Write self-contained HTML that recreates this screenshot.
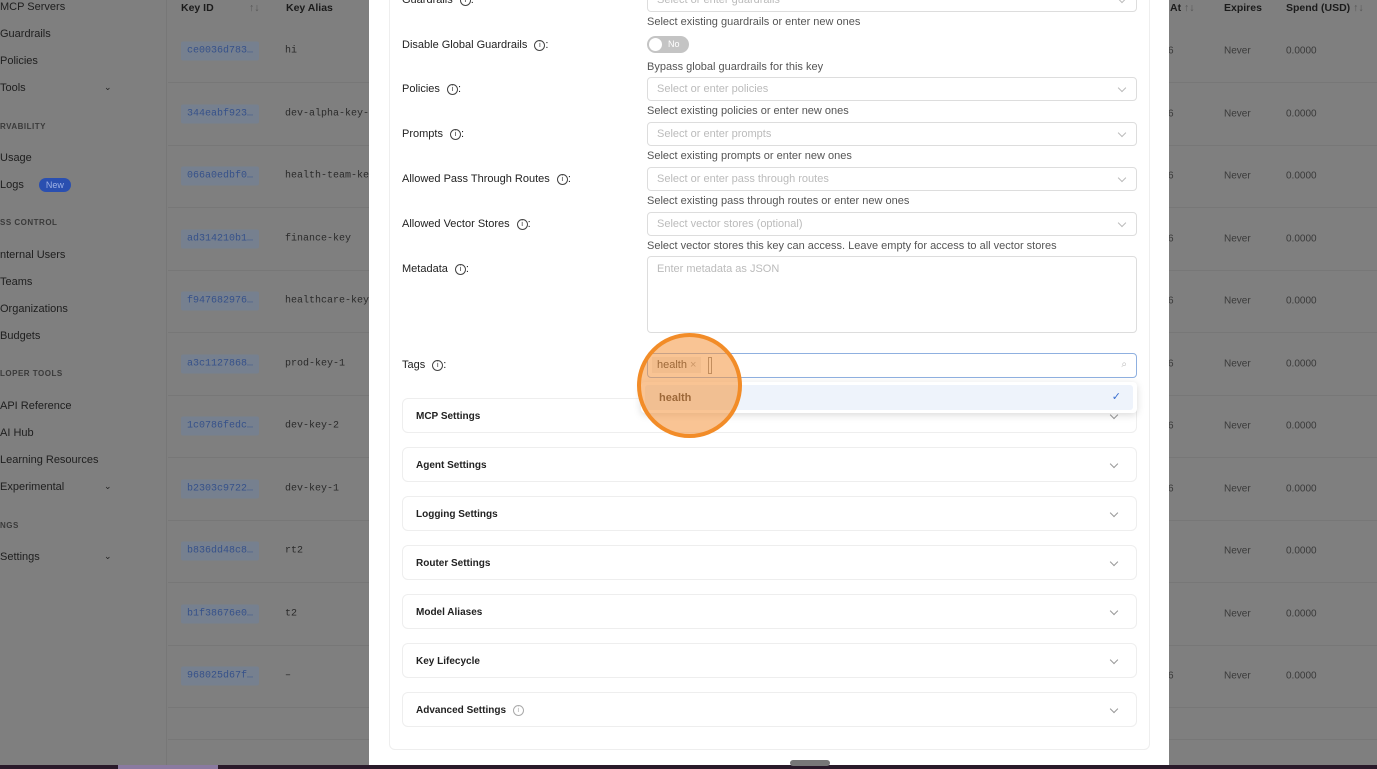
<!DOCTYPE html>
<html><head><meta charset="utf-8"><style>
*{box-sizing:border-box;margin:0;padding:0}
body{width:1377px;height:769px;overflow:hidden;position:relative;background:#7f7f7f;font-family:"Liberation Sans",sans-serif;font-size:11px;color:#222}
.sb{position:absolute;left:0;top:0;width:167px;height:769px;background:#7f7f7f;border-right:1px solid #777}
.sb div{position:absolute;left:0;font-size:11px;color:#1e1e1e}
.sb .h{font-size:8px;font-weight:bold;color:#3a3a3a;letter-spacing:.5px}
.chev{position:absolute;left:104px;font-size:9px}
.row{position:absolute;left:168px;width:1209px;height:62.5px;border-bottom:1px solid #777}
.kid{position:absolute;left:13px;top:50%;transform:translateY(-50%);background:#76808f;color:#36518a;font-family:"Liberation Mono",monospace;font-size:10px;padding:4px 6px;border-radius:2px}
.ka{position:absolute;left:117px;top:50%;transform:translateY(-50%);font-family:"Liberation Mono",monospace;font-size:10px;color:#2a2a2a}
.rt{position:absolute;top:50%;transform:translateY(-50%);font-size:10px;color:#3a3a3a}
.th{position:absolute;top:2px;font-weight:bold;font-size:10.5px;color:#1b1b1b}
.modal{position:absolute;left:369px;top:0;width:800px;height:765px;background:#fff}
.card{position:absolute;left:20px;top:-10px;width:761px;height:760px;border:1px solid #eee;border-radius:6px}
.lbl{position:absolute;left:402px;font-size:11px;color:#222;line-height:13px}
.i{display:inline-block;width:11px;height:11px;border:1px solid #444;border-radius:50%;font-size:7px;text-align:center;line-height:9px;vertical-align:top;margin-top:1px;margin-left:4px}
.inp{position:absolute;left:647px;width:490px;height:24px;border:1px solid #ddd;border-radius:4px;color:#bbb;font-size:11px;padding:5px 9px}
.inp:after{content:"";position:absolute;right:11px;top:7px;width:5px;height:5px;border-right:1px solid #bbb;border-bottom:1px solid #bbb;transform:rotate(45deg)}
.help{position:absolute;left:647px;font-size:11px;color:#555}
.acc{position:absolute;left:402px;width:735px;height:35px;border:1px solid #eee;border-radius:6px;font-weight:bold;font-size:10px;padding:12px 13px;color:#222}
.acc:after{content:"";position:absolute;right:19px;top:13px;width:5px;height:5px;border-right:1px solid #999;border-bottom:1px solid #999;transform:rotate(45deg)}
</style></head><body>
<div class="sb">
<div style="top:1px">MCP Servers</div>
<div style="top:28px">Guardrails</div>
<div style="top:55px">Policies</div>
<div style="top:82px">Tools</div><span class="chev" style="top:82px;position:absolute">⌄</span>
<div class="h" style="top:122px">RVABILITY</div>
<div style="top:152px">Usage</div>
<div style="top:179px">Logs <span style="background:#2a4fb0;color:#9fb2e6;border-radius:9px;padding:2px 7px;font-size:9px;margin-left:12px">New</span></div>
<div class="h" style="top:218px">SS CONTROL</div>
<div style="top:249px">nternal Users</div>
<div style="top:276px">Teams</div>
<div style="top:303px">Organizations</div>
<div style="top:330px">Budgets</div>
<div class="h" style="top:369px">LOPER TOOLS</div>
<div style="top:400px">API Reference</div>
<div style="top:427px">AI Hub</div>
<div style="top:454px">Learning Resources</div>
<div style="top:481px">Experimental</div><span class="chev" style="top:481px;position:absolute">⌄</span>
<div class="h" style="top:521px">NGS</div>
<div style="top:551px">Settings</div><span class="chev" style="top:551px;position:absolute">⌄</span>
</div>
<div class="th" style="left:181px">Key ID</div><div class="th" style="left:249px;color:#555;font-weight:normal">↑↓</div>
<div class="th" style="left:286px">Key Alias</div>
<div class="th" style="left:1170px">At <span style="color:#555;font-weight:normal">↑↓</span></div>
<div class="th" style="left:1224px">Expires</div>
<div class="th" style="left:1286px">Spend (USD) <span style="color:#555;font-weight:normal">↑↓</span></div>
<div class="row" style="top:20px;height:63px"><span class="kid">ce0036d783…</span><span class="ka">hi</span><span class="rt" style="left:1000px">6</span><span class="rt" style="left:1056px">Never</span><span class="rt" style="left:1118px">0.0000</span></div>
<div class="row" style="top:83px"><span class="kid">344eabf923…</span><span class="ka">dev-alpha-key-1</span><span class="rt" style="left:1000px">6</span><span class="rt" style="left:1056px">Never</span><span class="rt" style="left:1118px">0.0000</span></div>
<div class="row" style="top:145.5px"><span class="kid">066a0edbf0…</span><span class="ka">health-team-key</span><span class="rt" style="left:1000px">6</span><span class="rt" style="left:1056px">Never</span><span class="rt" style="left:1118px">0.0000</span></div>
<div class="row" style="top:208px"><span class="kid">ad314210b1…</span><span class="ka">finance-key</span><span class="rt" style="left:1000px">6</span><span class="rt" style="left:1056px">Never</span><span class="rt" style="left:1118px">0.0000</span></div>
<div class="row" style="top:270.5px"><span class="kid">f947682976…</span><span class="ka">healthcare-key</span><span class="rt" style="left:1000px">6</span><span class="rt" style="left:1056px">Never</span><span class="rt" style="left:1118px">0.0000</span></div>
<div class="row" style="top:333px"><span class="kid">a3c1127868…</span><span class="ka">prod-key-1</span><span class="rt" style="left:1000px">6</span><span class="rt" style="left:1056px">Never</span><span class="rt" style="left:1118px">0.0000</span></div>
<div class="row" style="top:395.5px"><span class="kid">1c0786fedc…</span><span class="ka">dev-key-2</span><span class="rt" style="left:1000px">6</span><span class="rt" style="left:1056px">Never</span><span class="rt" style="left:1118px">0.0000</span></div>
<div class="row" style="top:458px"><span class="kid">b2303c9722…</span><span class="ka">dev-key-1</span><span class="rt" style="left:1000px">6</span><span class="rt" style="left:1056px">Never</span><span class="rt" style="left:1118px">0.0000</span></div>
<div class="row" style="top:520.5px"><span class="kid">b836dd48c8…</span><span class="ka">rt2</span><span class="rt" style="left:1056px">Never</span><span class="rt" style="left:1118px">0.0000</span></div>
<div class="row" style="top:583px"><span class="kid">b1f38676e0…</span><span class="ka">t2</span><span class="rt" style="left:1056px">Never</span><span class="rt" style="left:1118px">0.0000</span></div>
<div class="row" style="top:645.5px"><span class="kid">968025d67f…</span><span class="ka">–</span><span class="rt" style="left:1000px">6</span><span class="rt" style="left:1056px">Never</span><span class="rt" style="left:1118px">0.0000</span></div>
<div class="row" style="top:708px;height:32px"></div>
<div style="position:absolute;left:0;top:765px;width:1377px;height:4px;background:#2a1a2a"></div>
<div style="position:absolute;left:118px;top:765px;width:100px;height:4px;background:#8a7aa0"></div>

<div class="modal"><div class="card"></div></div>
<div class="lbl" style="top:-6px">Guardrails <span class="i">i</span>:</div>
<div class="inp" style="top:-12px">Select or enter guardrails</div>
<div class="help" style="top:16px">Select existing guardrails or enter new ones</div>
<div class="lbl" style="top:39px">Disable Global Guardrails <span class="i">i</span>:</div>
<div style="position:absolute;left:647px;top:36px;width:42px;height:17px;border-radius:9px;background:#c4c4c4"><div style="position:absolute;left:2px;top:2px;width:13px;height:13px;border-radius:50%;background:#fff"></div><span style="position:absolute;left:21px;top:3px;color:#fff;font-size:9px">No</span></div>
<div class="help" style="top:61px">Bypass global guardrails for this key</div>
<div class="lbl" style="top:83px">Policies <span class="i">i</span>:</div>
<div class="inp" style="top:77px">Select or enter policies</div>
<div class="help" style="top:105px">Select existing policies or enter new ones</div>
<div class="lbl" style="top:128px">Prompts <span class="i">i</span>:</div>
<div class="inp" style="top:122px">Select or enter prompts</div>
<div class="help" style="top:150px">Select existing prompts or enter new ones</div>
<div class="lbl" style="top:173px">Allowed Pass Through Routes <span class="i">i</span>:</div>
<div class="inp" style="top:167px">Select or enter pass through routes</div>
<div class="help" style="top:195px">Select existing pass through routes or enter new ones</div>
<div class="lbl" style="top:218px">Allowed Vector Stores <span class="i">i</span>:</div>
<div class="inp" style="top:212px">Select vector stores (optional)</div>
<div class="help" style="top:240px">Select vector stores this key can access. Leave empty for access to all vector stores</div>
<div class="lbl" style="top:263px">Metadata <span class="i">i</span>:</div>
<div style="position:absolute;left:647px;top:256px;width:490px;height:77px;border:1px solid #ddd;border-radius:4px;color:#bbb;padding:6px 9px">Enter metadata as JSON</div>
<div class="lbl" style="top:359px">Tags <span class="i">i</span>:</div>
<div style="position:absolute;left:647px;top:353px;width:490px;height:25px;border:1px solid #8fb0e0;border-radius:4px"><span style="position:absolute;left:4px;top:3px;background:#f0f0f0;padding:2px 5px;font-size:11px;color:#333">health <span style="color:#999">×</span></span><span style="position:absolute;left:60px;top:3px;width:4px;height:17px;border:1px solid #888"></span><span style="position:absolute;right:9px;top:5px;color:#bbb;font-size:10px">⌕</span></div>
<div class="acc" style="top:398px">MCP Settings</div>
<div style="position:absolute;left:641px;top:382px;width:496px;height:31px;background:#fff;box-shadow:0 2px 8px rgba(0,0,0,.15);border-radius:4px"><div style="position:absolute;left:4px;top:3px;right:4px;height:25px;background:#eef3fb;border-radius:3px;font-weight:bold;font-size:11px;padding:7px 14px;color:#333">health<span style="position:absolute;right:12px;top:5px;color:#3a6fd0;font-weight:normal">✓</span></div></div>
<div class="acc" style="top:447px">Agent Settings</div>
<div class="acc" style="top:496px">Logging Settings</div>
<div class="acc" style="top:545px">Router Settings</div>
<div class="acc" style="top:594px">Model Aliases</div>
<div class="acc" style="top:643px">Key Lifecycle</div>
<div class="acc" style="top:692px">Advanced Settings <span class="i" style="border-color:#aaa;color:#aaa;font-weight:normal;margin-top:0">i</span></div>
<div style="position:absolute;left:637px;top:333px;width:105px;height:105px;border-radius:50%;background:rgba(244,148,60,.55);border:4px solid #f28c28"></div>
<div style="position:absolute;left:790px;top:760px;width:40px;height:6px;border-radius:3px;background:#777"></div>
</body></html>
